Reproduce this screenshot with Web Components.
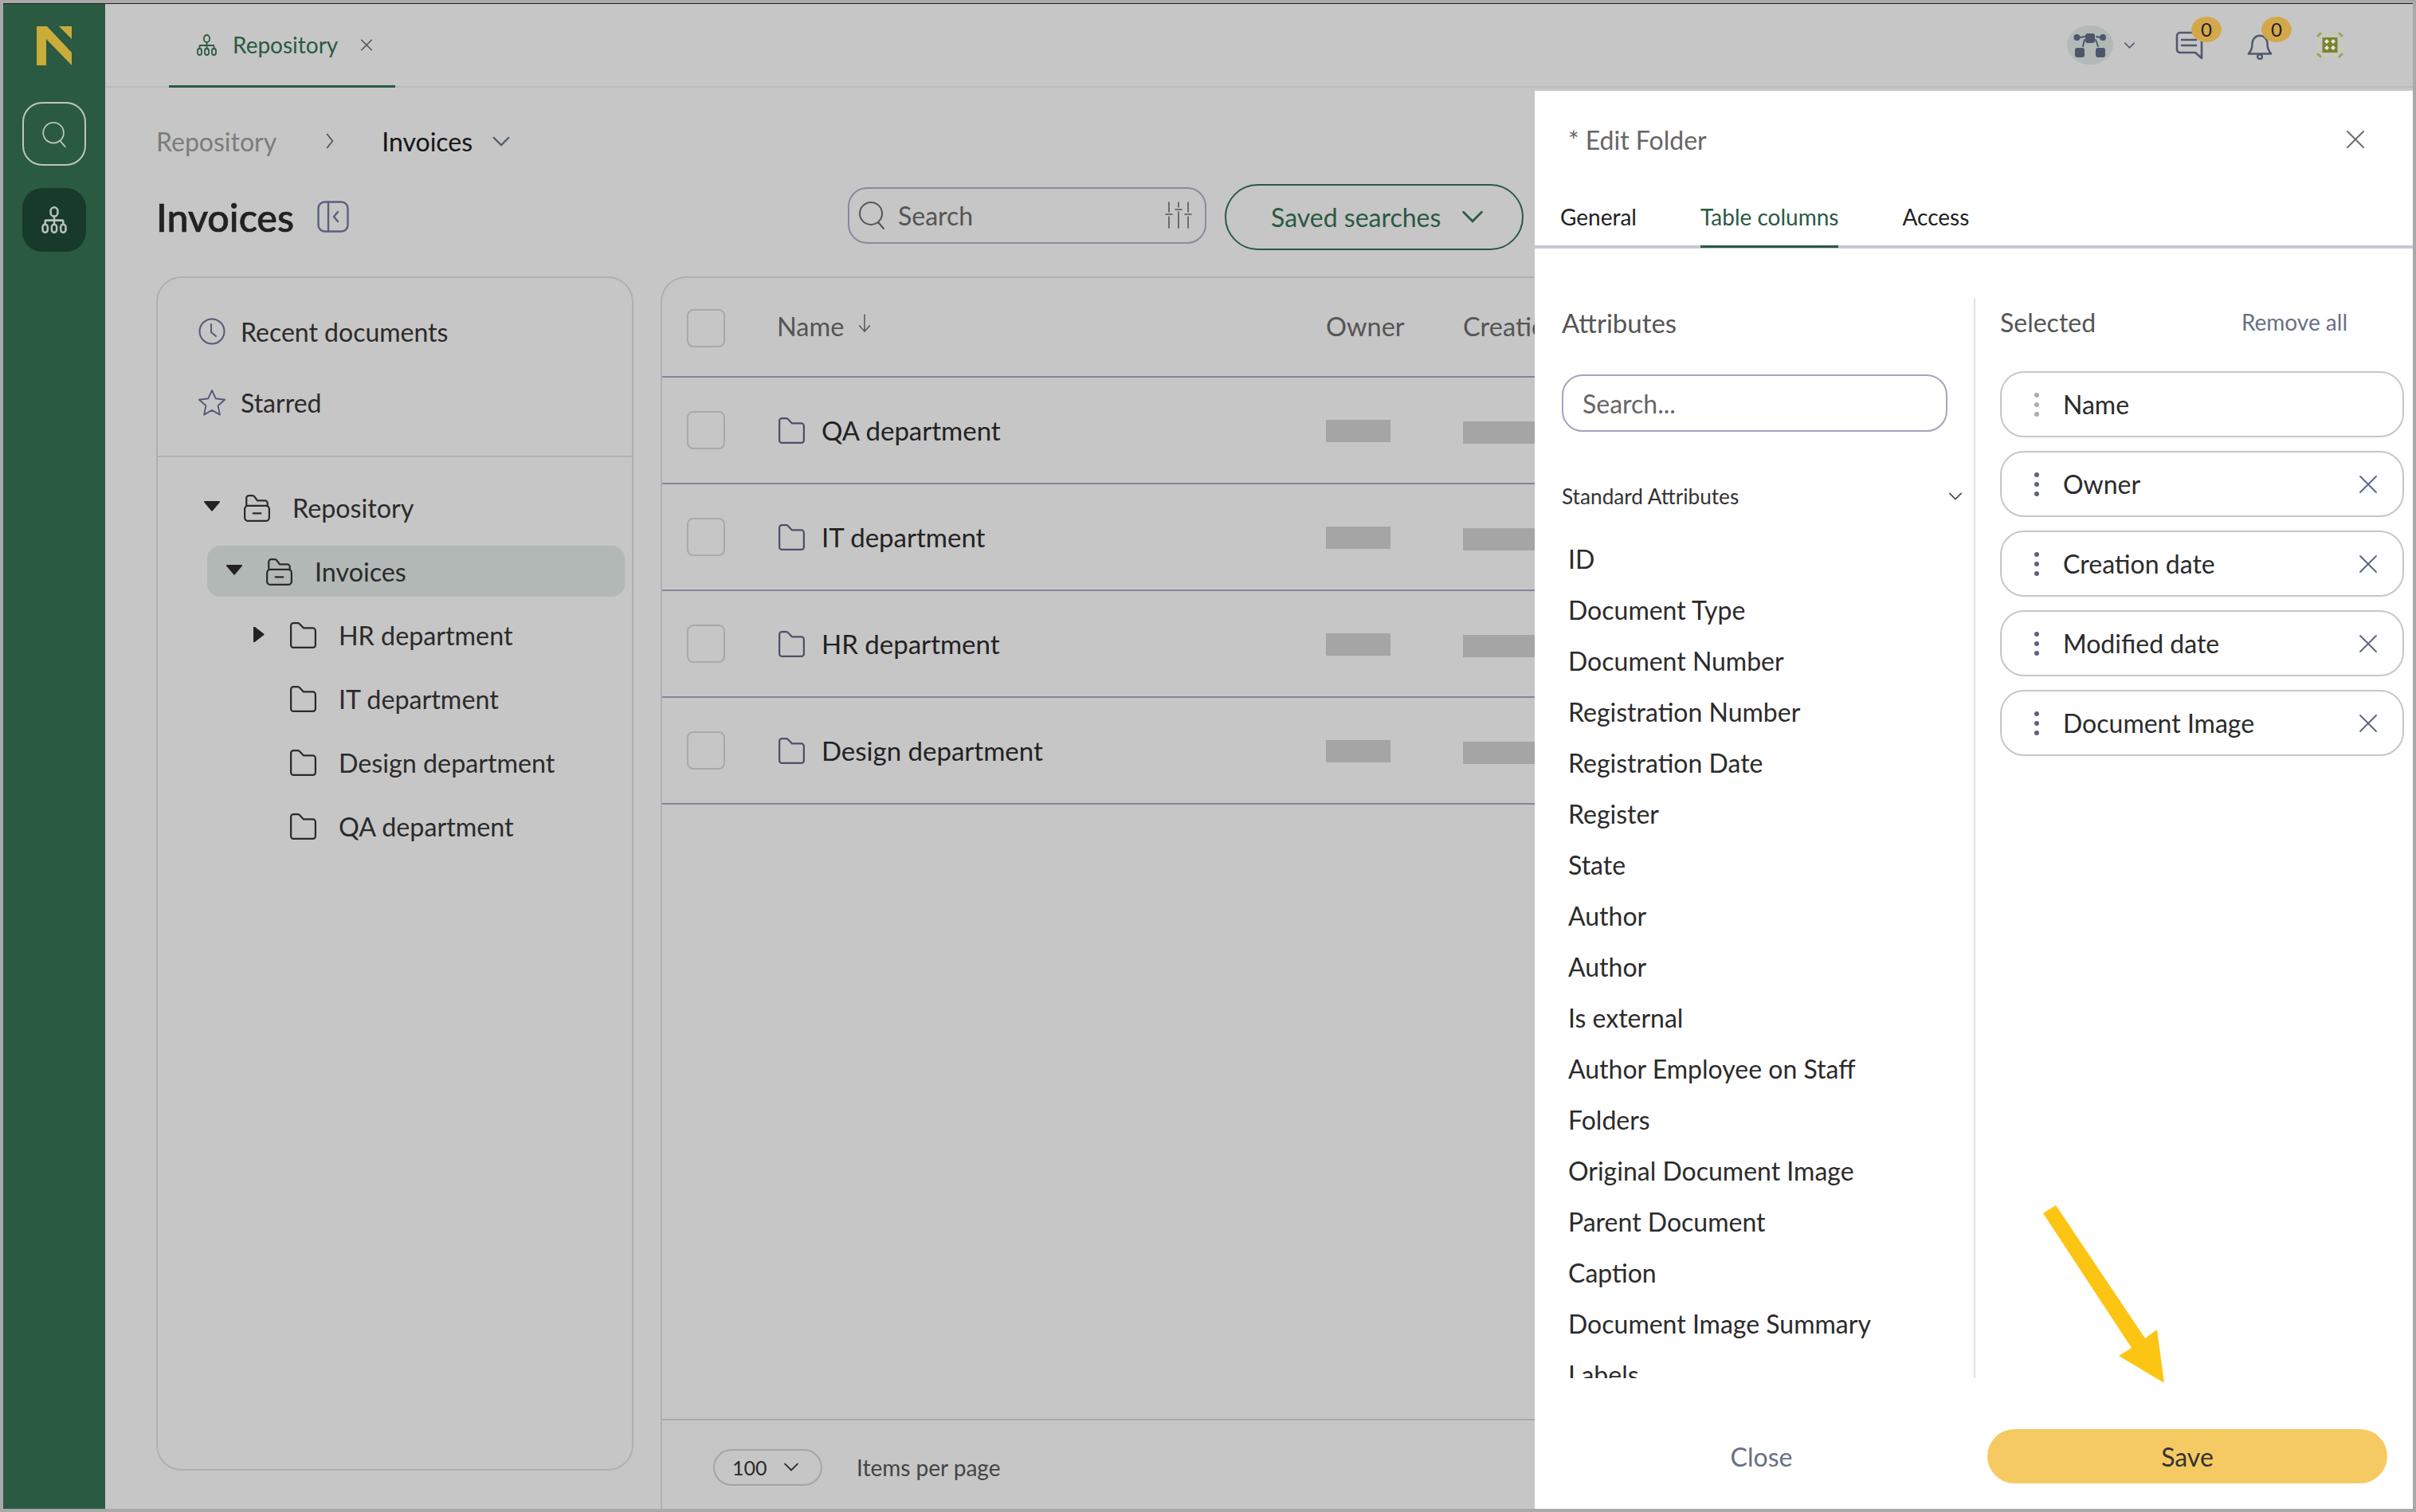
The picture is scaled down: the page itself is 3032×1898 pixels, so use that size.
<!DOCTYPE html>
<html lang="en"><head><meta charset="utf-8"><title>Edit Folder</title>
<style>
html,body{margin:0;padding:0;background:#a9a9a9;overflow:hidden}
body{font-family:Lato,"Liberation Sans",sans-serif;color:#2b2b2b}
</style></head><body>
<app-shell>
  <nav-rail slot="rail"></nav-rail>
  <top-bar slot="top"></top-bar>
  <page-head slot="head"></page-head>
  <tree-panel slot="tree">
    <quick-link icon="clock">Recent documents</quick-link>
    <quick-link icon="star">Starred</quick-link>
    <tree-row slot="tree" level="0" icon="open" open>Repository</tree-row>
    <tree-row slot="tree" level="1" icon="open" open selected>Invoices</tree-row>
    <tree-row slot="tree" level="2" icon="folder" closed>HR department</tree-row>
    <tree-row slot="tree" level="2" icon="folder">IT department</tree-row>
    <tree-row slot="tree" level="2" icon="folder">Design department</tree-row>
    <tree-row slot="tree" level="2" icon="folder">QA department</tree-row>
  </tree-panel>
  <doc-table slot="table">
    <doc-row>QA department</doc-row>
    <doc-row>IT department</doc-row>
    <doc-row>HR department</doc-row>
    <doc-row>Design department</doc-row>
  </doc-table>
  <edit-drawer slot="drawer">
    <attr-item>ID</attr-item><attr-item>Document Type</attr-item><attr-item>Document Number</attr-item>
    <attr-item>Registration Number</attr-item><attr-item>Registration Date</attr-item><attr-item>Register</attr-item>
    <attr-item>State</attr-item><attr-item>Author</attr-item><attr-item>Author</attr-item>
    <attr-item>Is external</attr-item><attr-item>Author Employee on Staff</attr-item><attr-item>Folders</attr-item>
    <attr-item>Original Document Image</attr-item><attr-item>Parent Document</attr-item><attr-item>Caption</attr-item>
    <attr-item>Document Image Summary</attr-item><attr-item>Labels</attr-item>
    <selected-chip slot="selected" locked>Name</selected-chip>
    <selected-chip slot="selected">Owner</selected-chip>
    <selected-chip slot="selected">Creation date</selected-chip>
    <selected-chip slot="selected">Modified date</selected-chip>
    <selected-chip slot="selected">Document Image</selected-chip>
  </edit-drawer>
</app-shell>
<script>
const ICONS={
 org:[26,27,'<rect x="9.5" y="1" width="7" height="9" rx="3.5"/><path d="M13 10v8M4 18v-3a1 1 0 0 1 1-1h16a1 1 0 0 1 1 1v3"/><rect x="1.5" y="18" width="5" height="8" rx="2.5"/><rect x="10.5" y="18" width="5" height="8" rx="2.5"/><rect x="19.5" y="18" width="5" height="8" rx="2.5"/>'],
 x:[24,24,'<path d="M2 2l20 20M22 2L2 22"/>'],
 chevD:[24,14,'<path d="M2 2l10 10L22 2"/>'],
 chevR:[12,24,'<path d="M2 2l8 10L2 22"/>'],
 search:[34,36,'<circle cx="16" cy="16" r="14"/><path d="M25 27l7 8"/>'],
 sliders:[34,34,'<path d="M5 1v12M5 19v14M17 1v6M17 13v20M29 1v12M29 19v14M1 16h8M13 10h8M25 16h8"/>'],
 panel:[40,40,'<rect x="1.5" y="1.5" width="37" height="37" rx="8"/><path d="M14 2v36M26 14l-5 6 5 6"/>'],
 clock:[34,34,'<circle cx="17" cy="17" r="15.5"/><path d="M16 8v10l6 5"/>'],
 star:[36,36,'<path d="M18 2l5 11 12 1.500-9 8 2.500 12L18 28.500 7.500 34.500 10 22.500l-9-8L13 13z" stroke-linejoin="round"/>'],
 folder:[33,33,'<path d="M2 5a3 3 0 0 1 3-3h5a3 3 0 0 1 2.500 1.200L17 8h11a3 3 0 0 1 3 3v17a3 3 0 0 1-3 3H5a3 3 0 0 1-3-3z" stroke-linejoin="round"/>'],
 open:[33,33,'<path d="M4 14V5a3 3 0 0 1 3-3h4a3 3 0 0 1 2.500 1.200L17 8h9a3 3 0 0 1 3 3v3"/><rect x="2" y="14" width="29" height="18" rx="4"/><path d="M12 23h9"/>'],
 arrowD:[18,26,'<path d="M9 1v23M2 16l7 8 7-8"/>'],
 chat:[36,36,'<path d="M33 34l-8-7H6a4 4 0 0 1-4-4V6a4 4 0 0 1 4-4h23a4 4 0 0 1 4 4z" stroke-linejoin="round"/><path d="M8 11h18M8 18h18"/>'],
 bell:[34,36,'<path d="M2 28c3-3 5-8 5-14a10 10 0 0 1 20 0c0 6 2 11 5 14z" stroke-linejoin="round"/><circle cx="17" cy="32" r="3"/>']
};
function svg(name,w,h,sw,color){const i=ICONS[name];return `<svg part="i" width="${w||i[0]}" height="${h||i[1]}" viewBox="0 0 ${i[0]} ${i[1]}" fill="none" stroke="${color||'currentColor'}" stroke-width="${sw||2}" stroke-linecap="round" style="display:block;flex:none">${i[2]}</svg>`}
class Base extends HTMLElement{
  connectedCallback(){if(this.shadowRoot)return;this.attachShadow({mode:'open'}).innerHTML=this.markup()}
}
customElements.define('app-shell',class extends Base{markup(){return `<style>
:host{display:block;width:3032px;height:1898px;box-sizing:border-box;padding:4px;background:#a9a9a9}
.inner{position:relative;height:1890px;box-sizing:border-box;border-top:1px solid #222;display:grid;grid-template-columns:128px 1fr;background:#c6c6c6;overflow:hidden}
main{display:flex;flex-direction:column;min-width:0}
.panels{flex:1;display:grid;grid-template-columns:599px 1fr;column-gap:34px;padding-left:64px;min-height:0}
.drawer{position:absolute;left:1922px;right:0;top:109px;bottom:0}
</style><div class="inner"><slot name="rail"></slot><main><slot name="top"></slot><slot name="head"></slot><div class="panels"><slot name="tree"></slot><slot name="table"></slot></div></main><div class="drawer"><slot name="drawer"></slot></div></div>`}});
customElements.define('nav-rail',class extends Base{markup(){return `<style>
:host{display:flex;flex-direction:column;align-items:center;background:#2a5a42}
.logo{margin-top:28px;display:block}
.b{width:80px;height:80px;box-sizing:border-box;border-radius:25px;display:flex;align-items:center;justify-content:center;color:#b9c2b9}
.s{border:2px solid #bfc6bc;margin-top:46px}.r{background:#173a2a;margin-top:28px}
</style><svg class="logo" width="44" height="49" viewBox="0 0 44 49"><path fill="#c9ac3a" d="M0 0h13l31 33v16L12 16v33H0zM28 0h16v16z"/></svg>
<div class="b s">${svg('search',34,33,2)}</div><div class="b r">${svg('org',34,34,2)}</div>`}});
customElements.define('top-bar',class extends Base{markup(){return `<style>
:host{display:flex;align-items:stretch;height:103px;border-bottom:2px solid #bababa;padding-left:80px;color:#505870}
.tab{width:284px;box-sizing:border-box;margin-bottom:-2px;border-bottom:3px solid #2a5a42;padding:0 0 0 34px;display:flex;align-items:center;color:#2a5a42;font-size:28px}
.tab span{margin-left:19px}.tab svg:last-child{margin-left:28px;color:#555}
.r{margin-left:auto;display:flex;align-items:center;padding-right:87px;height:103px}
.av{width:58px;height:49px;border-radius:50%;background:#b2b9b6;position:relative}
.ic{position:relative}.badge{position:absolute;top:-18px;left:20px;width:38px;height:32px;border-radius:50%;background:#d4a84a;color:#222;font-size:24px;line-height:32px;text-align:center}
</style><div class="tab">${svg('org',27,27,1.8)}<span>Repository</span>${svg('x',16,15,2.6)}</div>
<div class="r"><div class="av"><svg width="58" height="49" viewBox="0 0 58 49" fill="#4d566b" stroke="#4d566b" stroke-width="2" stroke-linecap="round"><rect x="24" y="11" width="10" height="10" rx="2"/><circle cx="12.500" cy="15" r="3"/><circle cx="45" cy="15" r="3"/><rect x="11" y="29" width="10" height="10" rx="2"/><rect x="37" y="29" width="10" height="10" rx="2"/><path d="M16 15l6 -1M42 15l-5-1M22 18l-2 8M36 18l3 8" fill="none"/></svg></div>
<div style="margin-left:13px">${svg('chevD',15,8,2.6)}</div>
<div class="ic" style="margin-left:50px">${svg('chat',36,36,2.6)}<div class="badge">0</div></div>
<div class="ic" style="margin-left:53px;margin-top:2px">${svg('bell',34,34,2.6)}<div class="badge" style="left:19px;top:-20px">0</div></div>
<svg style="margin-left:54px" width="34" height="33" viewBox="0 0 34 33"><g fill="#c9cfa2"><rect x="10" y="1" width="4" height="4" rx="1"/><rect x="20" y="1" width="4" height="4" rx="1"/><rect x="10" y="28" width="4" height="4" rx="1"/><rect x="20" y="28" width="4" height="4" rx="1"/><rect x="0" y="10" width="4" height="4" rx="1"/><rect x="0" y="19" width="4" height="4" rx="1"/><rect x="30" y="10" width="4" height="4" rx="1"/><rect x="30" y="19" width="4" height="4" rx="1"/></g><path d="M2 5l3-3M32 5l-3-3M2 28l3 3M32 28l-3 3" stroke="#9aa655" stroke-width="3" stroke-linecap="round"/><rect x="7.500" y="7" width="19" height="19" fill="#7a8232"/><g fill="#e6e6d6"><path d="M13 9l3 3-3 3-3-3zM21 9l3 3-3 3-3-3zM13 17l3 3-3 3-3-3zM21 17l3 3-3 3-3-3z"/></g></svg></div>`}});
customElements.define('page-head',class extends Base{markup(){return `<style>
:host{display:block;padding-left:64px;height:237px;box-sizing:border-box;color:#222}
.bc{display:flex;align-items:center;height:40px;margin-top:47px;padding-top:0;font-size:32px}
.bc .g{color:#7c7c7c}.bc .c{margin-left:62px;color:#5c5c5c}.bc .n{margin-left:60px;color:#151515}.bc .d{margin-left:24px;color:#555b70}
.h{display:flex;align-items:center;margin-top:34px;height:82px}
h1{margin:0;font-size:48.400px;font-weight:500;color:#222;-webkit-text-stroke:.7px #222}
.pi{margin-left:29px;color:#5c5f7e}
.sb{margin-left:626px;margin-top:-4px;width:450px;height:71px;box-sizing:border-box;border:2px solid #8a8a9c;border-radius:24px;display:flex;align-items:center;padding:0 16px 0 11px;color:#555;font-size:32px}
.sb span{margin-left:16px;flex:1}
.ss{margin-left:23px;width:375px;height:83px;box-sizing:border-box;border:2px solid #2a5a42;border-radius:42px;display:flex;align-items:center;padding-left:56px;color:#2a5a42;font-size:32px}
.ss svg{margin-left:26px}
</style><div class="bc"><span class="g">Repository</span><span class="c">${svg('chevR',10,20,2.2)}</span><span class="n">Invoices</span><span class="d">${svg('chevD',24,13,2.4)}</span></div>
<div class="h"><h1>Invoices</h1><span class="pi">${svg('panel',40,40,2.4)}</span>
<div class="sb">${svg('search',34,36,2)}<span>Search</span>${svg('sliders',34,34,1.6)}</div>
<div class="ss"><span>Saved searches</span>${svg('chevD',28,16,2.4)}</div></div>`}});
customElements.define('tree-panel',class extends Base{markup(){return `<style>
:host{display:block;border:2px solid #b0b0b0;border-radius:32px;margin-bottom:48px;box-sizing:border-box;min-height:0}
.q{padding:35px 0 35px 51px;display:flex;flex-direction:column;gap:25px;border-bottom:2px solid #b0b0b0}
.t{padding-top:31px;display:flex;flex-direction:column;gap:16.200px}
</style><div class="q"><slot></slot></div><div class="t"><slot name="tree"></slot></div>`}});
customElements.define('quick-link',class extends Base{markup(){return `<style>
:host{display:flex;align-items:center;height:64px;font-size:32px;color:#2b2b2b}
span{display:flex;width:53px;color:#565a75}
</style><span>${svg(this.getAttribute('icon'),34,34,2)}</span><slot></slot>`}});
customElements.define('tree-row',class extends Base{markup(){
 const l=+this.getAttribute('level'),sel=this.hasAttribute('selected');
 const ml=l==0?58:62, pl=l==0?0:l==1?24:54;
 let tri='';
 if(this.hasAttribute('open'))tri='<path d="M1 2h18a1 1 0 0 1 .800 1.600L11 14a1.300 1.300 0 0 1-2 0L.200 3.600A1 1 0 0 1 1 2z" fill="#222"/>';
 if(this.hasAttribute('closed'))tri='<path d="M4 0.500a1 1 0 0 1 1.700-.700L17 8.500a1.200 1.200 0 0 1 0 1.800L5.700 19a1 1 0 0 1-1.700-.700z" fill="#222"/>';
 return `<style>
:host{display:flex;align-items:center;height:64px;margin:0 ${l==0?0:9}px 0 ${ml}px;padding-left:${pl}px;border-radius:16px;font-size:32.250px;color:#2b2b2b;${sel?'background:#b2b8b6;':''}}
.f{margin:0 27px 0 29px;color:#2b2b2b}
</style><svg width="20" height="20" viewBox="0 0 20 20" style="flex:none">${tri}</svg><span class="f">${svg(this.getAttribute('icon'),35,35,2.100)}</span><slot></slot>`}});
customElements.define('doc-table',class extends Base{markup(){return `<style>
:host{display:flex;flex-direction:column;border:2px solid #b0b0b0;border-bottom:0;border-radius:32px 0 0 0;margin-right:-300px;min-height:0;font-size:32.500px}
.hd{height:125px;box-sizing:border-box;border-bottom:2px solid #85859a;display:grid;grid-template-columns:144px 689px 172px 91px;align-items:center;color:#555;flex:none}
.cb{margin-left:31px;width:48px;height:48px;box-sizing:border-box;border:2px solid #a9a9ad;border-radius:8px;margin-top:2px}
.nm{display:flex;align-items:center;gap:17px;margin-top:-3px}.nm svg{margin-top:-6px}
.o,.c{margin-top:-3px;white-space:nowrap;overflow:hidden}
.sp{flex:1}
.ft{height:113px;box-sizing:border-box;border-top:2px solid #a9a9a9;flex:none;display:flex;align-items:center;padding:6px 0 0 64px;color:#444;font-size:28px}
.pill{width:137px;height:46px;box-sizing:border-box;border:2px solid #a5a5a5;border-radius:23px;display:flex;align-items:center;padding-left:22px;color:#2b2b2b;font-size:25px;margin-right:43px}
.pill svg{margin-left:20px}
</style><div class="hd"><div class="cb"></div><div class="nm">Name ${svg('arrowD',18,24,1.6)}</div><div class="o">Owner</div><div class="c">Creation date</div></div>
<slot></slot><div class="sp"></div>
<div class="ft"><div class="pill">100${svg('chevD',20,11,2.4)}</div>Items per page</div>`}});
customElements.define('doc-row',class extends Base{markup(){return `<style>
:host{display:grid;grid-template-columns:146px 687px 172px 1fr;align-items:center;height:134px;box-sizing:border-box;border-bottom:2px solid #85859a;font-size:33px;color:#222}
.cb{margin-left:31px;width:48px;height:48px;box-sizing:border-box;border:2px solid #a9a9ad;border-radius:8px}
.n{display:flex;align-items:center;gap:20px}.ic{color:#4d5068;margin-left:-1px}
.b{height:28px;background:#a5a5a5}.b1{width:81px;margin-top:2px}.b2{width:300px;margin-top:6px}
</style><div class="cb"></div><div class="n"><span class="ic">${svg('folder',35,35,2.100)}</span><slot></slot></div><div class="b b1"></div><div class="b b2"></div>`}});
customElements.define('attr-item',class extends Base{markup(){return `<style>:host{display:block;height:64px;line-height:64px;padding-left:9px;font-size:32px;color:#2b2b2b;white-space:nowrap}</style><slot></slot>`}});
customElements.define('selected-chip',class extends Base{markup(){const lock=this.hasAttribute('locked');const d=lock?'#a9aeb0':'#5c6280';return `<style>
:host{display:flex;align-items:center;height:83px;box-sizing:border-box;border:2px solid #c6c6cc;border-radius:30px;font-size:32px;color:#2b2b2b}
.d{display:flex;flex-direction:column;gap:6px;margin-left:41px;width:6px;margin-right:30px}.d i{display:block;width:6px;height:6px;border-radius:50%;background:${d}}
.t{flex:1}.x{margin-right:31px;color:#5c6280}
</style><span class="d"><i></i><i></i><i></i></span><span class="t"><slot></slot></span>${lock?'':`<span class="x">${svg('x',24,24,1.8)}</span>`}`}});
customElements.define('edit-drawer',class extends Base{markup(){return `<style>
:host{display:flex;flex-direction:column;height:100%;background:#fff;font-size:32px;color:#2b2b2b;box-sizing:border-box}
.hd{height:122px;flex:none;display:flex;align-items:center;justify-content:space-between;padding:0 60px 0 42px;color:#666}
.hd svg{color:#6d6d6d}
.tabs{flex:none;height:72px;display:flex;border-bottom:4px solid #c8c8d4;font-size:28px;padding-left:32px;color:#222}
.tab{height:72px;display:flex;align-items:center;margin-right:80px}
.tab.on{color:#2a5a42;box-shadow:0 3px 0 #2a5a42}
.body{flex:none;height:1356px;margin-top:62px;display:grid;grid-template-columns:551px 1fr;overflow:hidden}
.l{padding-left:34px;padding-right:33px;min-height:0;overflow:hidden}
.r{border-left:2px solid #e2e2e2;padding:0 11px 0 31px}
.h1{height:62px;display:flex;align-items:center;color:#555;font-size:33px}
.inp{width:484px;height:72px;box-sizing:border-box;border:2px solid #a4a4bc;border-radius:26px;margin-top:34px;display:flex;align-items:center;padding-left:24px;color:#666}
.grp{margin-top:61px;height:40px;display:flex;align-items:center;justify-content:space-between;font-size:26.200px;color:#333;margin-right:-19px}
.grp svg{color:#444}
.list{margin-top:27px;margin-left:-1px}
.h2{height:60px;display:flex;align-items:center;justify-content:space-between;color:#555}
.h2 span+span{font-size:28px;color:#6a6f85;margin-right:71px}
.chips{margin-top:32px;display:flex;flex-direction:column;gap:17px}
.ft{flex:1;display:grid;grid-template-columns:551px 502px;padding-top:64px;box-sizing:border-box}
.cl{height:68px;display:flex;align-items:center;justify-content:center;color:#6a6f85;padding-left:18px}
.sv{height:68px;border-radius:34px;background:#f6ca62;display:flex;align-items:center;justify-content:center;color:#333;margin-left:17px;width:502px;font-size:32px}
</style>
<div class="hd"><span>* Edit Folder</span>${svg('x',24,24,2)}</div>
<div class="tabs"><div class="tab">General</div><div class="tab on">Table columns</div><div class="tab">Access</div></div>
<div class="body"><div class="l"><div class="h1">Attributes</div><div class="inp">Search...</div>
<div class="grp"><span>Standard Attributes</span>${svg('chevD',18,10,2.2)}</div><div class="list"><slot></slot></div></div>
<div class="r"><div class="h2"><span>Selected</span><span>Remove all</span></div><div class="chips"><slot name="selected"></slot></div></div></div>
<div class="ft"><div class="cl">Close</div><div class="sv">Save</div></div>`}});
customElements.define('note-arrow',class extends HTMLElement{connectedCallback(){this.attachShadow({mode:'open'}).innerHTML=`<style>:host{position:fixed;left:0;top:0;pointer-events:none}</style><svg width="3032" height="1898" style="display:block"><polygon fill="#fdc513" points="2580,1513 2692,1680 2707,1669 2716,1736 2659,1702 2675,1692 2564,1523"/></svg>`}});
document.body.appendChild(document.createElement('note-arrow'));
</script>
</body></html>
